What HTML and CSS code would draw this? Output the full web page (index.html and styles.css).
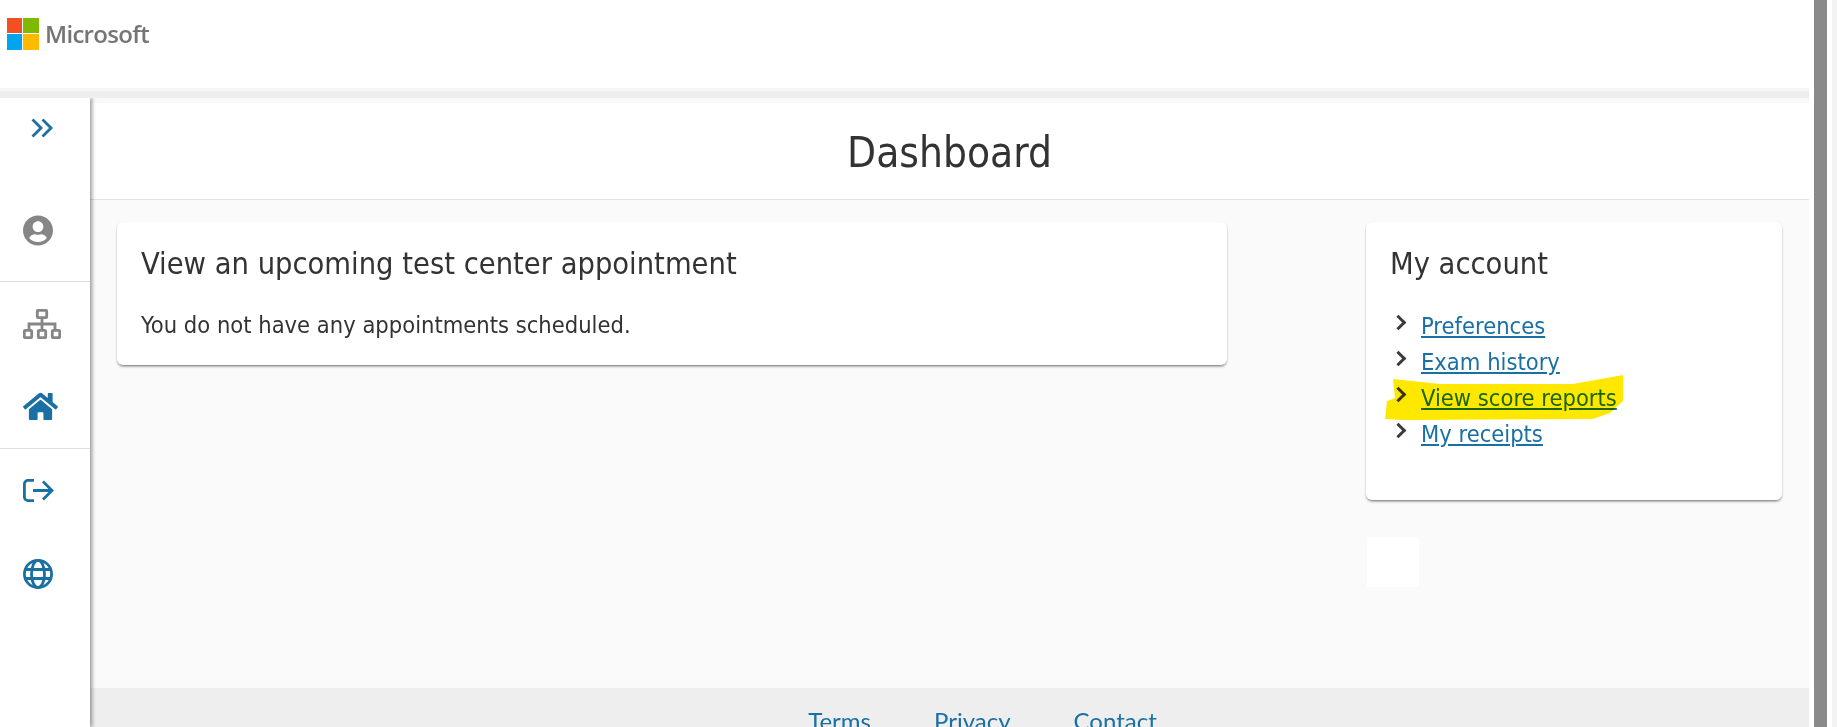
FILE: index.html
```html
<!DOCTYPE html>
<html lang="en">
<head>
    <meta charset="UTF-8">
    <meta name="viewport" content="width=device-width, initial-scale=1.0">
    <title>Dashboard</title>
    <link rel="stylesheet" href="styles.css">
</head>
<body>

    <div class="app">
        <!-- Top bar -->
        <header class="topbar">
            <svg class="ms-logo" viewBox="0 0 32 32" width="32" height="32">
                <rect x="0" y="0" width="15" height="15" fill="#f25022"/>
                <rect x="16" y="0" width="16" height="15" fill="#7fba00"/>
                <rect x="0" y="16" width="15" height="16" fill="#00a4ef"/>
                <rect x="16" y="16" width="16" height="16" fill="#ffb900"/>
            </svg>
            <span class="ms-name">Microsoft</span>
        </header>
        <div class="band"></div>

        <div class="layout">
            <!-- Sidebar -->
            <aside class="sidebar">
                <div class="side-group side-first">
                    <a class="side-toggle" href="#">
                        <svg viewBox="0 0 22 20" width="22" height="20" fill="none" stroke="#1a6fa3" stroke-width="2.8">
                            <path d="M1.5 1.5L10 10L1.5 18.5"/>
                            <path d="M11.5 1.5L20 10L11.5 18.5"/>
                        </svg>
                    </a>
                    <a class="side-item side-user" href="#">
                        <svg viewBox="0 0 496 512" width="30" height="31" fill="#868686">
                            <path d="M248 8C111 8 0 119 0 256s111 248 248 248 248-111 248-248S385 8 248 8zm0 96c48.6 0 88 39.4 88 88s-39.4 88-88 88-88-39.4-88-88 39.4-88 88-88zm0 344c-58.7 0-111.3-26.6-146.5-68.2 18.8-35.4 55.6-59.8 98.5-59.8 2.4 0 4.8.4 7.1 1.1 13 4.2 26.6 6.9 40.9 6.9 14.3 0 28-2.7 40.9-6.9 2.3-.7 4.7-1.1 7.1-1.1 42.9 0 79.7 24.4 98.5 59.8C359.3 421.4 306.7 448 248 448z"/>
                        </svg>
                    </a>
                </div>
                <div class="side-group">
                    <a class="side-item" href="#">
                        <svg viewBox="0 0 38 30" width="38" height="30" fill="none" stroke="#868686" stroke-width="2.8">
                            <rect x="14.3" y="1.3" width="9.4" height="7.4" rx="1"/>
                            <path d="M19 9V15M6 21V15H32V21M19 15V21"/>
                            <rect x="1.3" y="21.3" width="7.4" height="7.4" rx="1"/>
                            <rect x="15.3" y="21.3" width="7.4" height="7.4" rx="1"/>
                            <rect x="29.3" y="21.3" width="7.4" height="7.4" rx="1"/>
                        </svg>
                    </a>
                    <a class="side-item" href="#">
                        <svg viewBox="0 0 576 512" width="35" height="31" fill="#1a6fa3">
                            <path d="M280.37 148.26L96 300.11V464a16 16 0 0 0 16 16l112.06-.29a16 16 0 0 0 15.92-16V368a16 16 0 0 1 16-16h64a16 16 0 0 1 16 16v95.64a16 16 0 0 0 16 16.05L464 480a16 16 0 0 0 16-16V300L295.67 148.26a12.19 12.19 0 0 0-15.3 0zM571.6 251.47L488 182.56V44.05a12 12 0 0 0-12-12h-56a12 12 0 0 0-12 12v72.61L318.47 43a48 48 0 0 0-61 0L4.34 251.47a12 12 0 0 0-1.6 16.9l25.5 31A12 12 0 0 0 45.15 301l235.22-193.74a12.19 12.19 0 0 1 15.3 0L530.9 301a12 12 0 0 0 16.9-1.6l25.5-31a12 12 0 0 0-1.7-16.93z"/>
                        </svg>
                    </a>
                </div>
                <div class="side-group side-last">
                    <a class="side-item" href="#">
                        <svg viewBox="0 0 31 23" width="31" height="23" fill="none" stroke="#1a6fa3" stroke-width="2.8">
                            <path d="M11 1.4H5a3.6 3.6 0 0 0-3.6 3.6V18a3.6 3.6 0 0 0 3.6 3.6H11"/>
                            <path d="M10 11.5H29M20 2.5L29 11.5L20 20.5"/>
                        </svg>
                    </a>
                    <a class="side-item" href="#">
                        <svg viewBox="0 0 30 30" width="30" height="30" fill="none" stroke="#1a6fa3" stroke-width="2.8">
                            <circle cx="15" cy="15" r="13.6"/>
                            <ellipse cx="15" cy="15" rx="6.5" ry="13.6"/>
                            <path d="M2 10.5H28M2 19.5H28"/>
                        </svg>
                    </a>
                </div>
            </aside>

            <!-- Main -->
            <div class="main">
                <div class="page-title">
                    <h1>Dashboard</h1>
                </div>
                <div class="content">
                    <section class="card card-wide">
                        <h2>View an upcoming test center appointment</h2>
                        <p>You do not have any appointments scheduled.</p>
                    </section>
                    <div class="right-col">
                        <section class="card card-account">
                            <h2>My account</h2>
                            <ul class="account-links">
                                <li><a href="#">Preferences</a></li>
                                <li><a href="#">Exam history</a></li>
                                <li>
                                    <a href="#">View score reports</a>
                                    <svg class="marker" viewBox="0 0 240 46" width="240" height="46">
                                        <path fill="#ffe800" d="M8 5L55 10L188 10L238 1L238 27L225 39L208 45L18 46L0 45L2 27L10 24Z"/>
                                    </svg>
                                </li>
                                <li><a href="#">My receipts</a></li>
                            </ul>
                        </section>
                        <div class="blank-box"></div>
                    </div>
                </div>
                <footer class="footer">
                    <a href="#">Terms</a>
                    <a href="#">Privacy</a>
                    <a href="#">Contact</a>
                </footer>
            </div>
        </div>
    </div>

    <div class="scroll-area">
        <div class="scroll-thumb"></div>
        <div class="scroll-edge"></div>
    </div>

</body>
</html>
```

FILE: styles.css
```css
html, body {
    height: 100%;
}

body {
    font-family: "DejaVu Sans", sans-serif;
    font-stretch: condensed;
    background-color: #ffffff;
    color: #333;
    margin: 0;
    padding: 0;
    display: flex;
    overflow: hidden;
}

.app {
    width: 1809px;
    height: 727px;
    display: flex;
    flex-direction: column;
}

/* Top bar */
.topbar {
    height: 88px;
    display: flex;
    align-items: flex-start;
    padding: 18px 0 0 7px;
    box-sizing: border-box;
    background-color: #ffffff;
}

.ms-name {
    font-family: "Open Sans", sans-serif;
    font-stretch: normal;
    font-size: 24px;
    font-weight: 600;
    color: #757575;
    margin-left: 6px;
    line-height: 32px;
    letter-spacing: -0.7px;
}

.band {
    height: 7px;
    border-top: 3px solid #f7f7f7;
    background-color: #eeeeee;
}

.layout {
    flex: 1;
    display: flex;
    min-height: 0;
}

/* Sidebar */
.sidebar {
    width: 90px;
    flex-shrink: 0;
    background-color: #ffffff;
    box-shadow: 2px 0 4px rgba(0, 0, 0, 0.4);
    clip-path: inset(0 -10px 0 0);
    position: relative;
    z-index: 1;
}

.side-group {
    border-bottom: 1px solid #dddddd;
    padding-left: 23px;
}

.side-first {
    height: 184px;
    box-sizing: border-box;
}

.side-last {
    border-bottom: none;
}

.side-toggle {
    height: 60px;
    display: flex;
    align-items: center;
    padding-left: 8px;
}

.side-item {
    height: 83px;
    display: flex;
    align-items: center;
}

.side-user {
    margin-top: 31px;
}

/* Main */
.main {
    flex: 1;
    min-width: 0;
    display: flex;
    flex-direction: column;
    background-color: #fafafa;
    border-top: 5px solid #f9f9f9;
}

.page-title {
    height: 97px;
    box-sizing: border-box;
    padding-top: 3px;
    background-color: #ffffff;
    border-bottom: 1px solid #e3e3e3;
    display: flex;
    align-items: center;
    justify-content: center;
}

.page-title h1 {
    margin: 0;
    font-size: 42px;
    font-weight: 400;
}

.content {
    flex: 1;
    min-height: 0;
    display: flex;
    justify-content: space-between;
    padding: 22px 27px 0 27px;
}

.card {
    background-color: #ffffff;
    border-radius: 6px;
    box-shadow: 0 2px 3px -1px rgba(0, 0, 0, 0.6), 0 0 2px rgba(0, 0, 0, 0.06);
    padding: 24px;
    box-sizing: border-box;
}

.card h2 {
    margin: 0;
    font-size: 30.5px;
    font-weight: 400;
    line-height: 36px;
}

.card p {
    margin: 25px 0 0 0;
    font-size: 23.5px;
    line-height: 36px;
}

.card-wide {
    width: 1110px;
    height: 143px;
}

.right-col {
    width: 416px;
}

.card-account {
    height: 278px;
}

.account-links {
    list-style: none;
    margin: 26px 0 0 0;
    padding: 0 0 0 31px;
}

.account-links li {
    position: relative;
    height: 36px;
    font-size: 23.5px;
    line-height: 36px;
}

.account-links li::before {
    content: "";
    position: absolute;
    left: -28px;
    top: 9px;
    width: 8px;
    height: 8px;
    border-top: 3px solid #3a3a3a;
    border-right: 3px solid #3a3a3a;
    transform: rotate(45deg);
}

.account-links a {
    color: #1a6fa3;
}

/* hand drawn highlighter stroke */
.marker {
    position: absolute;
    left: -36px;
    top: -6px;
    mix-blend-mode: multiply;
}

.blank-box {
    width: 52px;
    height: 50px;
    margin: 37px 0 0 1px;
    background-color: #ffffff;
}

/* Footer */
.footer {
    height: 39px;
    box-sizing: border-box;
    flex-shrink: 0;
    background-color: #eeeeee;
    display: flex;
    justify-content: center;
    gap: 63px;
    padding: 18px 0 0 66px;
    font-family: Lato, sans-serif;
    font-stretch: normal;
    font-size: 24px;
}

.footer a {
    color: #1a6fa3;
    text-decoration: none;
}

/* Scrollbar of the captured window */
.scroll-area {
    flex: 1;
    display: flex;
    height: 727px;
    padding-left: 5px;
}

.scroll-thumb {
    width: 13px;
    background-color: #8a8a8a;
}

.scroll-edge {
    width: 5px;
    margin-left: 5px;
    background-color: #f3f3f3;
}
```
